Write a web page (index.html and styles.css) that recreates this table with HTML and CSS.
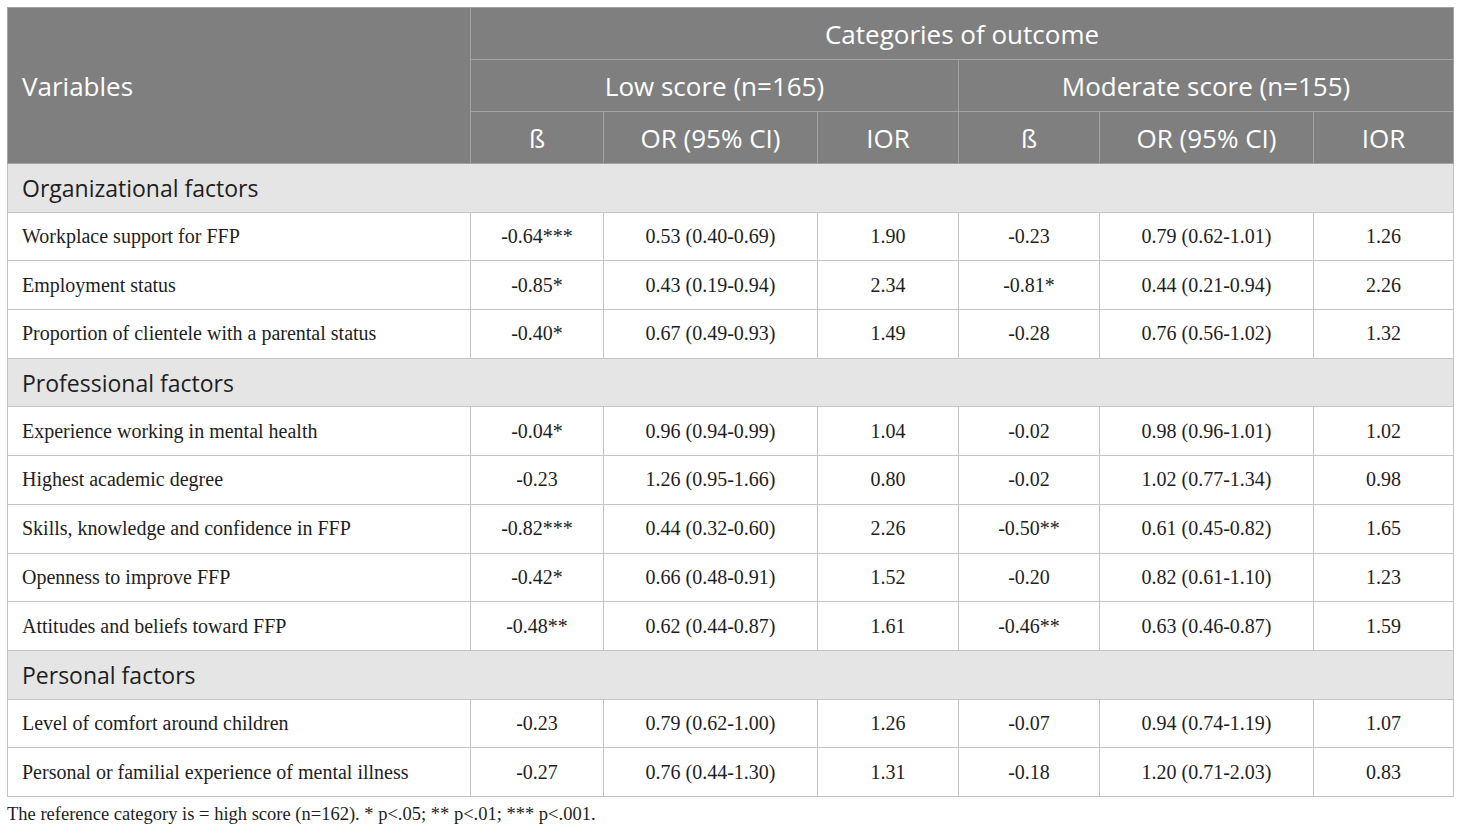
FILE: index.html
```html
<!DOCTYPE html>
<html lang="en">
<head>
<meta charset="UTF-8">
<title>Categories of outcome</title>
<link rel="stylesheet" href="styles.css">
</head>
<body>
<table class="results">
    <colgroup>
        <col class="c-var">
        <col class="c-b1">
        <col class="c-or">
        <col class="c-ior1">
        <col class="c-b2">
        <col class="c-or">
        <col class="c-ior2">
    </colgroup>
    <thead>
        <tr>
            <th rowspan="3" class="left">Variables</th>
            <th colspan="6">Categories of outcome</th>
        </tr>
        <tr>
            <th colspan="3">Low score (n=165)</th>
            <th colspan="3">Moderate score (n=155)</th>
        </tr>
        <tr>
            <th>ß</th>
            <th>OR (95% CI)</th>
            <th>IOR</th>
            <th>ß</th>
            <th>OR (95% CI)</th>
            <th>IOR</th>
        </tr>
    </thead>
    <tbody>
        <tr class="section"><td colspan="7">Organizational factors</td></tr>
        <tr><td>Workplace support for FFP</td><td>-0.64***</td><td>0.53 (0.40-0.69)</td><td>1.90</td><td>-0.23</td><td>0.79 (0.62-1.01)</td><td>1.26</td></tr>
        <tr><td>Employment status</td><td>-0.85*</td><td>0.43 (0.19-0.94)</td><td>2.34</td><td>-0.81*</td><td>0.44 (0.21-0.94)</td><td>2.26</td></tr>
        <tr><td>Proportion of clientele with a parental status</td><td>-0.40*</td><td>0.67 (0.49-0.93)</td><td>1.49</td><td>-0.28</td><td>0.76 (0.56-1.02)</td><td>1.32</td></tr>
        <tr class="section"><td colspan="7">Professional factors</td></tr>
        <tr><td>Experience working in mental health</td><td>-0.04*</td><td>0.96 (0.94-0.99)</td><td>1.04</td><td>-0.02</td><td>0.98 (0.96-1.01)</td><td>1.02</td></tr>
        <tr><td>Highest academic degree</td><td>-0.23</td><td>1.26 (0.95-1.66)</td><td>0.80</td><td>-0.02</td><td>1.02 (0.77-1.34)</td><td>0.98</td></tr>
        <tr><td>Skills, knowledge and confidence in FFP</td><td>-0.82***</td><td>0.44 (0.32-0.60)</td><td>2.26</td><td>-0.50**</td><td>0.61 (0.45-0.82)</td><td>1.65</td></tr>
        <tr><td>Openness to improve FFP</td><td>-0.42*</td><td>0.66 (0.48-0.91)</td><td>1.52</td><td>-0.20</td><td>0.82 (0.61-1.10)</td><td>1.23</td></tr>
        <tr><td>Attitudes and beliefs toward FFP</td><td>-0.48**</td><td>0.62 (0.44-0.87)</td><td>1.61</td><td>-0.46**</td><td>0.63 (0.46-0.87)</td><td>1.59</td></tr>
        <tr class="section"><td colspan="7">Personal factors</td></tr>
        <tr><td>Level of comfort around children</td><td>-0.23</td><td>0.79 (0.62-1.00)</td><td>1.26</td><td>-0.07</td><td>0.94 (0.74-1.19)</td><td>1.07</td></tr>
        <tr><td>Personal or familial experience of mental illness</td><td>-0.27</td><td>0.76 (0.44-1.30)</td><td>1.31</td><td>-0.18</td><td>1.20 (0.71-2.03)</td><td>0.83</td></tr>
    </tbody>
</table>
<p class="note">The reference category is = high score (n=162). * p&lt;.05; ** p&lt;.01; *** p&lt;.001.</p>
</body>
</html>
```
FILE: styles.css
```css
body {
    margin: 0;
    padding: 7px;
    background: #fff;
    color: #1e1e1e;
}
.results {
    width: 1446px;
    border-collapse: collapse;
    table-layout: fixed;
    font-family: "Liberation Serif", serif;
    font-size: 20px;
}
.c-var { width: 463px; }
.c-b1 { width: 133px; }
.c-or { width: 214px; }
.c-ior1 { width: 141px; }
.c-b2 { width: 141px; }
.c-ior2 { width: 140px; }
.results th {
    height: 51px;
    padding: 0 14px;
    background: #7f7f7f;
    color: #fff;
    font-family: "Open Sans", sans-serif;
    font-weight: normal;
    font-size: 26px;
    text-align: center;
    border: 1px solid #a3a3a3;
}
.results th.left {
    text-align: left;
}
.results td {
    height: 47.7px;
    padding: 0 14px;
    text-align: center;
    border: 1px solid #c4c4c4;
}
.results td:first-child {
    text-align: left;
}
.results .section td {
    background: #e5e5e5;
    font-family: "Open Sans", sans-serif;
    font-size: 23px;
}
.note {
    margin: 7px 0 0;
    font-family: "Liberation Serif", serif;
    font-size: 18.5px;
    color: #1e1e1e;
}
```
